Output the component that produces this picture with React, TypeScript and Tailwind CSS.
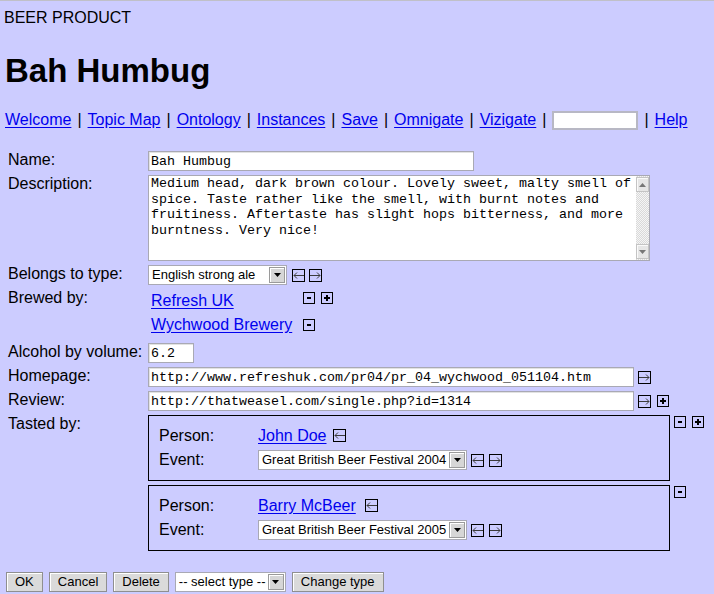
import React from "react";

const LINK = "text-[#0000ee] underline underline-offset-[2px]";
const LABEL = "w-[148px] shrink-0 pl-[8px] text-[16px] leading-[18px] whitespace-nowrap";
const INPUT =
  "h-[20px] shrink-0 border border-[#a9a9b4] bg-white px-[2px] font-['Liberation_Mono',monospace] text-[13.33px] text-black shadow-[inset_1px_1px_0_#e2e2e2] outline-none";

function Arrow({ dir }: { dir: "left" | "right" }) {
  return (
    <svg width="13" height="13" viewBox="0 0 13 13" className="block shrink-0">
      <rect x="0.5" y="0.5" width="12" height="12" fill="none" stroke="#000" />
      {dir === "left" ? (
        <path d="M2 6.5H12M5 3.5L2 6.5L5 9.5" fill="none" stroke="#3c3c3c" />
      ) : (
        <path d="M1 6.5H11M8 3.5L11 6.5L8 9.5" fill="none" stroke="#3c3c3c" />
      )}
    </svg>
  );
}

function PM({ plus }: { plus?: boolean }) {
  return (
    <svg width="12" height="12" viewBox="0 0 12 12" className="block shrink-0">
      <rect x="0.5" y="0.5" width="11" height="11" fill="none" stroke="#000" />
      {plus ? (
        <>
          <rect x="3" y="5" width="6" height="2" fill="#000" />
          <rect x="5" y="3" width="2" height="6" fill="#000" />
        </>
      ) : (
        <rect x="4" y="5" width="4" height="2" fill="#000" />
      )}
    </svg>
  );
}

function Sel({ text, className }: { text: string; className: string }) {
  return (
    <div className={"flex h-[20px] shrink-0 items-center border border-[#a9a9b4] bg-white " + className}>
      <span className="flex-1 overflow-hidden whitespace-nowrap pl-[3px] text-[13px] leading-[16px]">{text}</span>
      <span className="mr-[1px] flex h-[16px] w-[16px] items-center justify-center border border-[#9a9a9a] bg-[#d6d6d6] shadow-[inset_1px_1px_0_#ffffff]">
        <svg width="7" height="4" viewBox="0 0 7 4" className="block">
          <path d="M0 0H7L3.5 4Z" fill="#000" />
        </svg>
      </span>
    </div>
  );
}

function Btn({ children }: { children: React.ReactNode }) {
  return (
    <button className="h-[20px] border border-[#8f8f8f] bg-[#dadada] px-[8px] text-[13px] leading-[16px] text-black shadow-[inset_1px_1px_0_#ffffff]">
      {children}
    </button>
  );
}

function ScrollBtn({ up }: { up?: boolean }) {
  return (
    <div className="flex h-[15px] w-[13px] items-center justify-center border border-[#c4c4c4] bg-[#e6e6e6] shadow-[inset_1px_1px_0_#fafafa]">
      <svg width="7" height="4" viewBox="0 0 7 4" className="block">
        <path d={up ? "M0 4H7L3.5 0Z" : "M0 0H7L3.5 4Z"} fill="#777" />
      </svg>
    </div>
  );
}

const NAV = ["Welcome", "Topic Map", "Ontology", "Instances", "Save", "Omnigate", "Vizigate"];

const DESC = [
  "Medium head, dark brown colour. Lovely sweet, malty smell of",
  "spice. Taste rather like the smell, with burnt notes and",
  "fruitiness. Aftertaste has slight hops bitterness, and more",
  "burntness. Very nice!",
];

function Tasting({ person, event, gap }: { person: string; event: string; gap: string }) {
  return (
    <div className="h-[66px] w-[522px] shrink-0 border border-black pl-[10px] pt-[10px]">
      <div className="flex h-[24px] items-start">
        <div className="w-[99px] shrink-0 pt-[1px] text-[16px] leading-[18px]">Person:</div>
        <a className={LINK + " pt-[1px] text-[16px] leading-[18px]"} href="#">
          {person}
        </a>
        <span className={gap + " mt-[3px]"}>
          <Arrow dir="left" />
        </span>
      </div>
      <div className="flex h-[20px] items-center">
        <div className="w-[99px] shrink-0 text-[16px] leading-[18px]">Event:</div>
        <Sel text={event} className="w-[209px]" />
        <span className="ml-[4px]">
          <Arrow dir="left" />
        </span>
        <span className="ml-[5px]">
          <Arrow dir="right" />
        </span>
      </div>
    </div>
  );
}

export default function App() {
  return (
    <div className="min-h-screen w-full border-t border-[#c0c0c8] bg-[#ccccff] font-['Liberation_Sans',Arial,sans-serif] text-black">
      <div className="mt-[8px] h-[18px] pl-[4px] text-[16px] leading-[18px]">BEER PRODUCT</div>
      <h1 className="mt-[25px] h-[38px] pl-[5px] text-[33px] font-bold leading-[38px]">Bah Humbug</h1>

      <div className="mt-[20px] flex h-[20px] items-center pl-[5px] text-[16px] leading-[18px]">
        {NAV.map((n) => (
          <React.Fragment key={n}>
            <a className={LINK} href="#">
              {n}
            </a>
            <span className="mx-[6px]">|</span>
          </React.Fragment>
        ))}
        <input className="h-[19px] w-[86px] border-2 border-[#b8b8c4] bg-white outline-none" />
        <span className="mx-[6px]">|</span>
        <a className={LINK} href="#">
          Help
        </a>
      </div>

      <div className="mt-[21px] flex flex-col gap-[4px]">
        <div className="flex">
          <div className={LABEL}>Name:</div>
          <input className={INPUT + " w-[326px]"} readOnly value="Bah Humbug" />
        </div>

        <div className="flex">
          <div className={LABEL}>Description:</div>
          <div className="flex h-[86px] w-[502px] shrink-0 border border-[#a9a9b4] bg-white">
            <div className="flex-1 overflow-hidden pl-[2px]">
              <div className="whitespace-pre font-['Liberation_Mono',monospace] text-[13.33px] leading-[15.5px]">
                {DESC.map((l) => (
                  <div key={l}>{l}</div>
                ))}
              </div>
            </div>
            <div className="flex w-[13px] flex-col justify-between bg-[repeating-conic-gradient(#d9d9d9_0_25%,#f5f5f5_0_50%)] bg-[length:2px_2px] py-[1px]">
              <ScrollBtn up />
              <ScrollBtn />
            </div>
          </div>
        </div>

        <div className="flex">
          <div className={LABEL}>Belongs to type:</div>
          <div className="flex items-center">
            <Sel text="English strong ale" className="w-[139px]" />
            <span className="ml-[5px]">
              <Arrow dir="left" />
            </span>
            <span className="ml-[4px]">
              <Arrow dir="right" />
            </span>
          </div>
        </div>

        <div className="flex h-[50px]">
          <div className={LABEL}>Brewed by:</div>
          <div className="grid h-fit w-fit grid-cols-[149px_auto] gap-x-[3px] pl-[3px]">
            <div className="h-[24px] pt-[3px] text-[16px] leading-[18px]">
              <a className={LINK} href="#">
                Refresh UK
              </a>
            </div>
            <div className="mt-[3px] flex gap-[6px]">
              <PM />
              <PM plus />
            </div>
            <div className="h-[26px] whitespace-nowrap pt-[3px] text-[16px] leading-[18px]">
              <a className={LINK} href="#">
                Wychwood Brewery
              </a>
            </div>
            <div className="mt-[6px] flex">
              <PM />
            </div>
          </div>
        </div>

        <div className="flex">
          <div className={LABEL}>Alcohol by volume:</div>
          <input className={INPUT + " w-[46px]"} readOnly value="6.2" />
        </div>

        <div className="flex">
          <div className={LABEL}>Homepage:</div>
          <div className="flex items-center">
            <input
              className={INPUT + " w-[486px]"}
              readOnly
              value="http://www.refreshuk.com/pr04/pr_04_wychwood_051104.htm"
            />
            <span className="ml-[4px]">
              <Arrow dir="right" />
            </span>
          </div>
        </div>

        <div className="flex">
          <div className={LABEL}>Review:</div>
          <div className="flex items-center">
            <input className={INPUT + " w-[486px]"} readOnly value="http://thatweasel.com/single.php?id=1314" />
            <span className="ml-[4px]">
              <Arrow dir="right" />
            </span>
            <span className="ml-[6px]">
              <PM plus />
            </span>
          </div>
        </div>

        <div className="flex">
          <div className={LABEL}>Tasted by:</div>
          <div className="flex flex-col gap-[4px]">
            <div className="flex items-start">
              <Tasting person="John Doe" event="Great British Beer Festival 2004" gap="ml-[6px]" />
              <div className="ml-[4px] mt-[1px] flex gap-[6px]">
                <PM />
                <PM plus />
              </div>
            </div>
            <div className="flex items-start">
              <Tasting person="Barry McBeer" event="Great British Beer Festival 2005" gap="ml-[9px]" />
              <div className="ml-[4px] mt-[1px] flex">
                <PM />
              </div>
            </div>
          </div>
        </div>
      </div>

      <div className="mt-[21px] flex items-center gap-[6px] pl-[6px]">
        <Btn>OK</Btn>
        <Btn>Cancel</Btn>
        <Btn>Delete</Btn>
        <Sel text="-- select type --" className="w-[111px]" />
        <Btn>Change type</Btn>
      </div>
    </div>
  );
}
